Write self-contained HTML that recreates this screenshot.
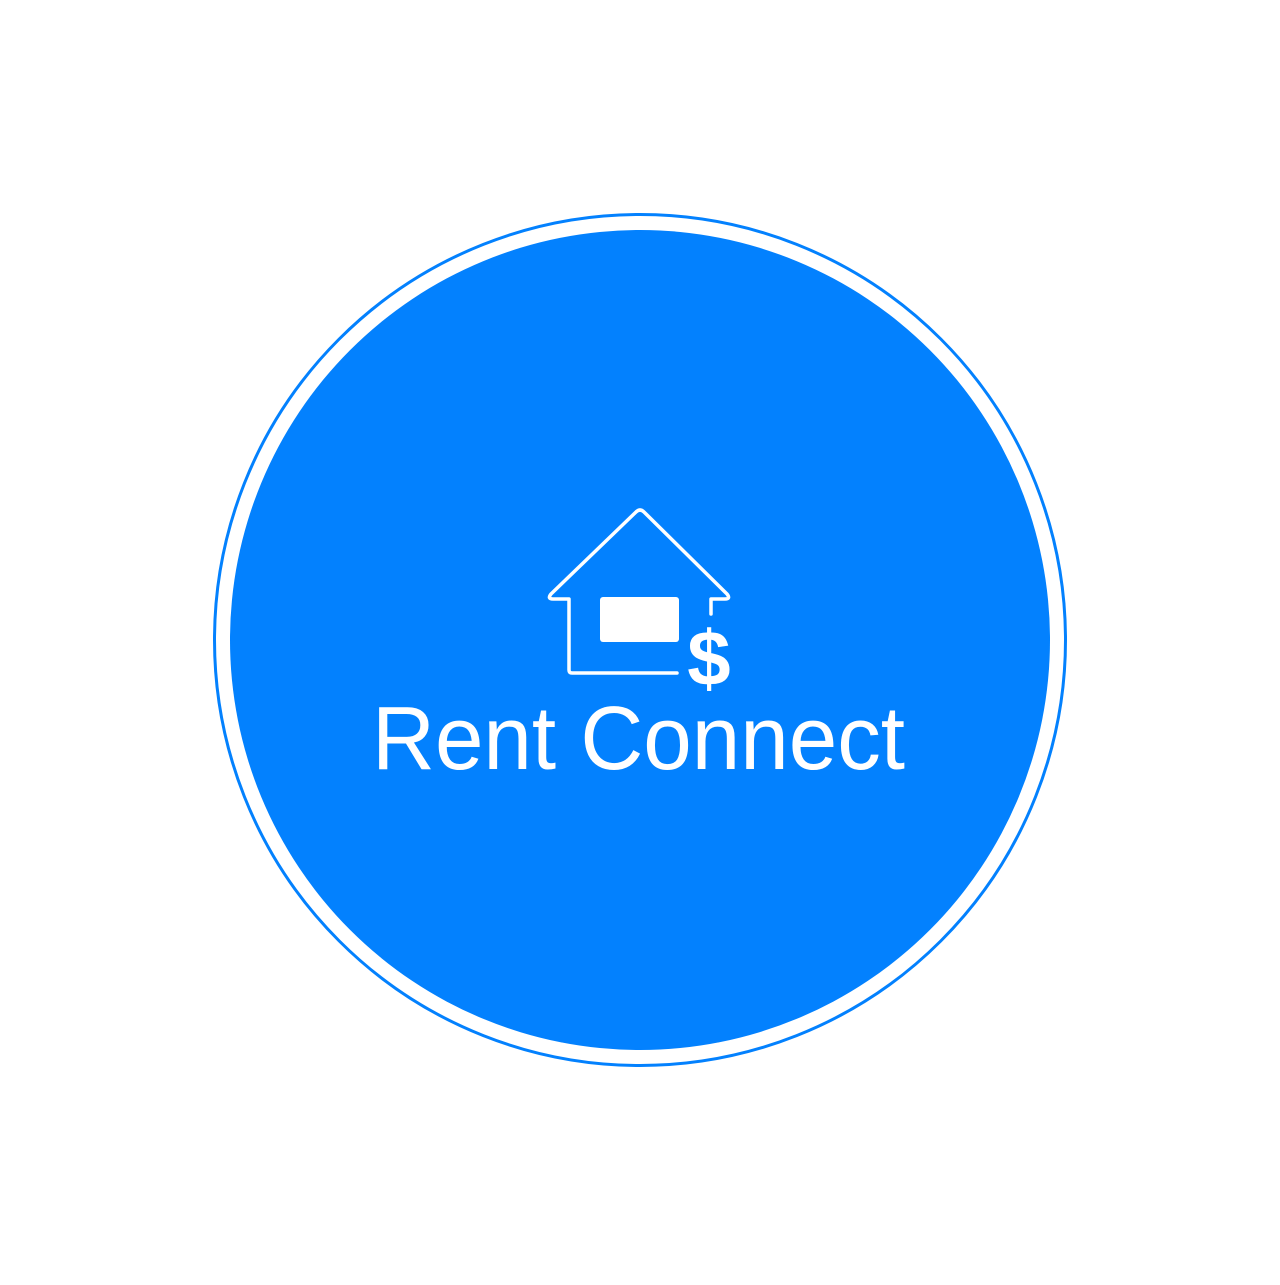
<!DOCTYPE html>
<html><head><style>html,body{margin:0;padding:0;background:#fff;}</style></head>
<body>
<svg width="1280" height="1280" viewBox="0 0 1280 1280" xmlns="http://www.w3.org/2000/svg">
<rect width="1280" height="1280" fill="#fff"/>
<circle cx="640" cy="640" r="425.5" fill="none" stroke="#0381fe" stroke-width="3"/>
<circle cx="640" cy="640" r="410" fill="#0381fe"/>
<g fill="none" stroke="#fff" stroke-width="3.5" stroke-linecap="round" stroke-linejoin="round">
<path d="M677 673 L572 673 Q569 673 569 670 L569 599 L553 599 Q547 599 551 594 L636 512 Q640 508 644 512 L727 594 Q731 599 725 599 L711 599 L711 614"/>
</g>
<rect x="600" y="597" width="79" height="45" rx="3" fill="#fff"/>
<text x="709" y="685" font-family="Liberation Sans, sans-serif" font-weight="bold" font-size="78" fill="#fff" text-anchor="middle">$</text>
<text x="372" y="769" font-family="Liberation Sans, sans-serif" font-size="90" fill="#fff" textLength="533" lengthAdjust="spacingAndGlyphs">Rent Connect</text>
</svg>
</body></html>
